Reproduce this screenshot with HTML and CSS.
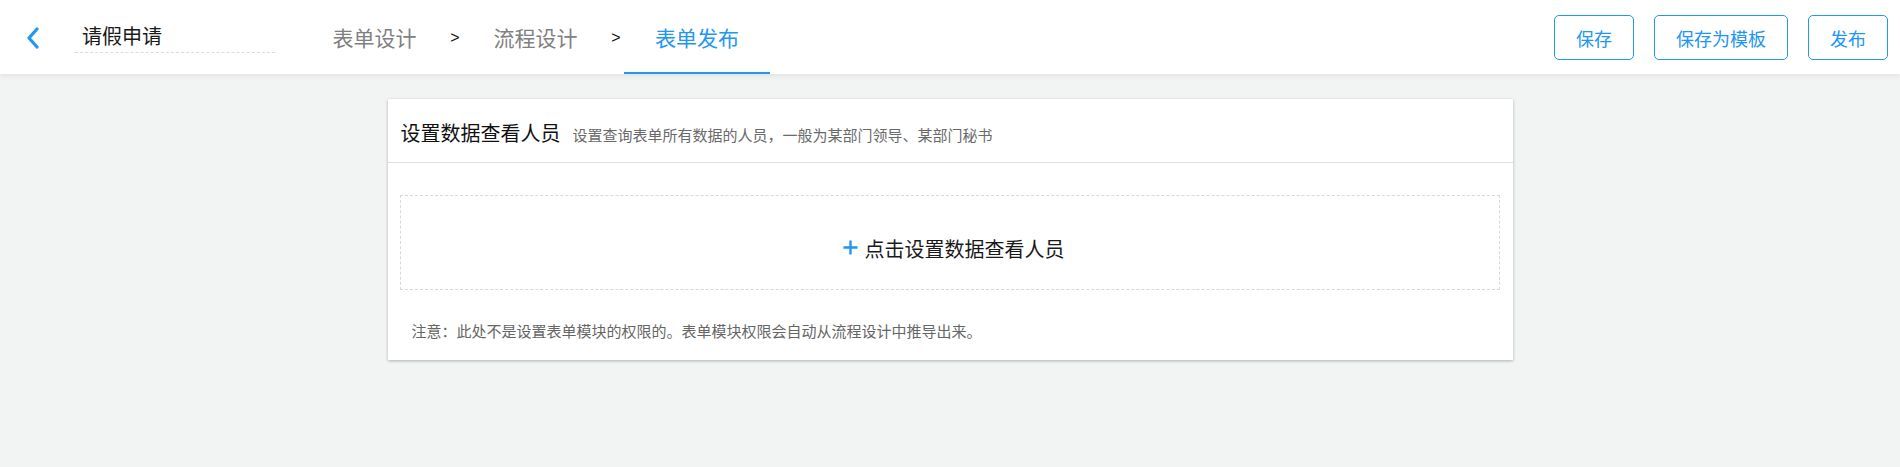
FILE: index.html
```html
<!DOCTYPE html>
<html lang="zh-CN">
<head>
<meta charset="utf-8">
<title>请假申请</title>
<link rel="stylesheet" href="styles.css">
</head>
<body>
<header class="topbar">
  <div class="left">
    <a class="back" href="#">
      <svg width="14" height="22" viewBox="0 0 14 22"><polyline points="11,2 3,11 11,20" fill="none" stroke="#2196f3" stroke-width="3.2" stroke-linecap="round" stroke-linejoin="round"/></svg>
    </a>
    <div class="title">请假申请</div>
  </div>
  <nav class="steps">
    <div class="step">表单设计</div>
    <div class="sep">&gt;</div>
    <div class="step">流程设计</div>
    <div class="sep">&gt;</div>
    <div class="step active">表单发布</div>
  </nav>
  <div class="actions">
    <button class="btn">保存</button>
    <button class="btn">保存为模板</button>
    <button class="btn">发布</button>
  </div>
</header>
<main class="main">
  <section class="card">
    <div class="card-head">
      <span class="card-title">设置数据查看人员</span>
      <span class="card-sub">设置查询表单所有数据的人员，一般为某部门领导、某部门秘书</span>
    </div>
    <div class="card-body">
      <div class="picker">
        <svg class="plus" width="15" height="15" viewBox="0 0 15 15"><path d="M7.5 0.5v14M0.5 7.5h14" stroke="#2196f3" stroke-width="2.4" fill="none"/></svg>
        <span>点击设置数据查看人员</span>
      </div>
      <p class="note">注意：此处不是设置表单模块的权限的。表单模块权限会自动从流程设计中推导出来。</p>
    </div>
  </section>
</main>
</body>
</html>
```
FILE: styles.css
```css
html, body {
  margin: 0;
  padding: 0;
}
body {
  background: #f2f3f3;
  font-family: "Noto Sans CJK SC", "Noto Sans", "Liberation Sans", sans-serif;
  color: #222;
  height: 467px;
  overflow: hidden;
}
.topbar {
  height: 74px;
  background: #fff;
  display: flex;
  align-items: stretch;
  box-shadow: 0 2px 5px rgba(0, 0, 0, 0.07);
  position: relative;
  z-index: 1;
}
.left {
  display: flex;
  align-items: center;
}
.back {
  display: flex;
  margin-left: 26px;
  margin-top: 1px;
}
.title {
  margin-left: 35px;
  width: 193px;
  padding-left: 7px;
  font-size: 20px;
  line-height: 28px;
  color: #1a1a1a;
  border-bottom: 1px dashed #dcdcdc;
  padding-bottom: 2px;
  margin-top: 1px;
}
.steps {
  display: flex;
  align-items: stretch;
  margin-left: 27px;
}
.step {
  width: 145px;
  display: flex;
  align-items: center;
  justify-content: center;
  font-size: 21px;
  color: #808080;
  box-sizing: border-box;
  border-bottom: 2px solid transparent;
  padding-top: 2px;
}
.step.active {
  color: #2196f3;
  border-bottom-color: #2196f3;
  width: 146px;
}
.sep {
  width: 16px;
  display: flex;
  align-items: center;
  justify-content: center;
  font-family: "Liberation Sans", sans-serif;
  font-size: 16px;
  color: #111;
  padding-top: 1px;
}
.actions {
  margin-left: auto;
  margin-right: 12px;
  display: flex;
  align-items: center;
  gap: 20px;
}
.btn {
  height: 45px;
  padding: 0 21px;
  min-width: 80px;
  border: 1px solid #2196f3;
  border-radius: 5px;
  background: #fff;
  color: #2196f3;
  font-family: "Noto Sans CJK SC", sans-serif;
  font-size: 18px;
  margin-top: 1px;
}
.main {
  padding-top: 25px;
}
.card {
  width: 1125px;
  margin: 0 auto;
  background: #fff;
  box-shadow: 0 1px 3px rgba(0, 0, 0, 0.28);
}
.card-head {
  height: 64px;
  border-bottom: 1px solid #dedede;
  display: flex;
  align-items: baseline;
  padding: 19px 13px 0;
  box-sizing: border-box;
}
.card-title {
  font-size: 20px;
  color: #111;
}
.card-sub {
  margin-left: 12px;
  font-size: 15px;
  color: #6a6a6a;
}
.card-body {
  padding: 32px 13px 19px 12px;
}
.picker {
  height: 95px;
  box-sizing: border-box;
  border: 1px dashed #d9d9d9;
  display: flex;
  align-items: center;
  justify-content: center;
  gap: 7px;
  padding-left: 8px;
  padding-top: 11px;
  font-size: 20px;
  color: #1a1a1a;
}
.plus {
  display: block;
  margin-top: -1px;
}
.note {
  margin: 31px 0 0 12px;
  font-size: 15px;
  line-height: 20px;
  color: #666;
}
```
